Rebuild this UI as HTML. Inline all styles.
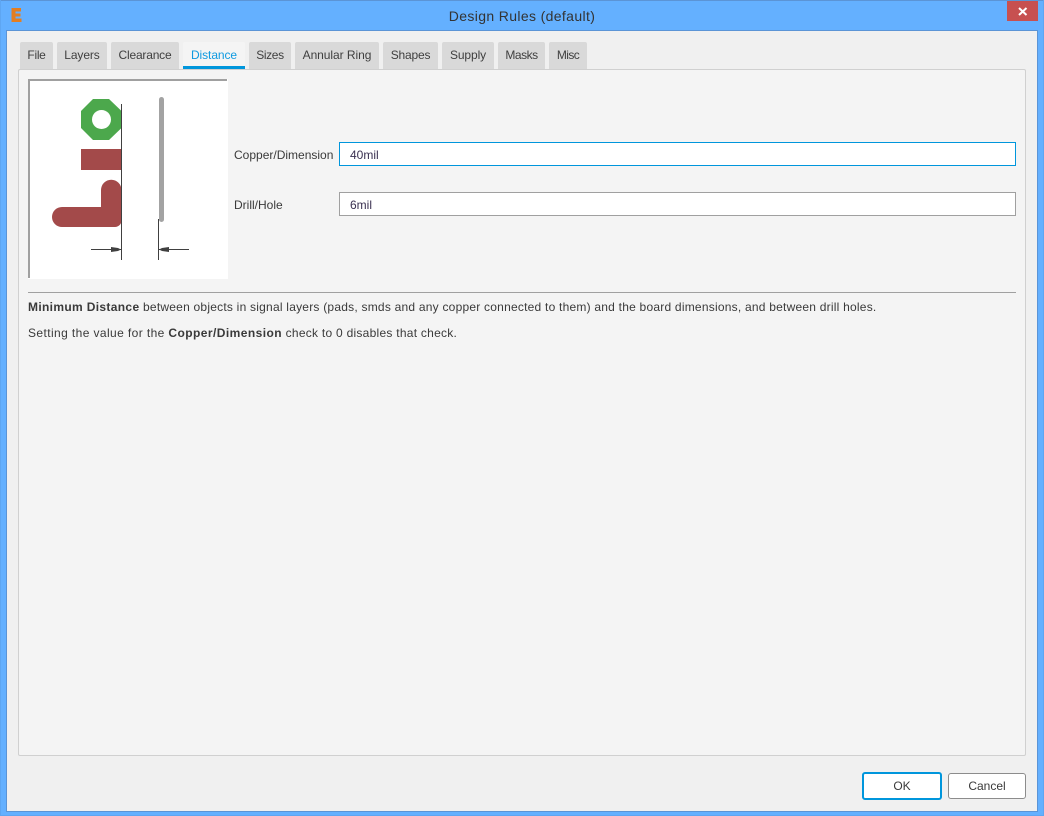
<!DOCTYPE html>
<html><head><meta charset="utf-8">
<style>
html,body{margin:0;padding:0}
body{width:1044px;height:816px;overflow:hidden;position:relative;background:#64b0ff;font-family:"Liberation Sans",sans-serif;font-size:12px;color:#3a3a3a}
div{position:absolute;box-sizing:border-box;white-space:nowrap}
b{font-weight:bold}
.tab{top:42px;height:27px;background:#d9d9d9;border-radius:2px 2px 0 0;text-align:center;line-height:26px;color:#3f3f3f}
.input{left:339px;width:677px;height:24px;background:#fff;border:1px solid #a0a0a0;line-height:24px;padding-left:10px;color:#3a3050}
.lbl{left:234px;line-height:16px}
.t{left:28px;line-height:16px;color:#3a3a3a}
</style></head><body>
<div style="left:0;top:0;width:1044px;height:1px;background:#5b94d6"></div>
<div style="left:0;top:0;width:1px;height:816px;background:#5ea6f2"></div>
<div style="left:1043px;top:0;width:1px;height:816px;background:#5ea6f2"></div>
<div style="left:0;top:815px;width:1044px;height:1px;background:#5ea6f2"></div>
<svg style="position:absolute;left:11px;top:8px" width="12" height="15"><path d="M0.500 0H10V3.500H4.500V5.500H9.500V8.500H4.500V10.500H10.500V14H0.500Z" fill="#e37e22"/></svg>
<div style="left:422px;top:7px;width:200px;text-align:center;font-size:14px;line-height:18px;color:#333;letter-spacing:.36px">Design Rules (default)</div>
<div style="left:1007px;top:1px;width:31px;height:20px;background:#c75050"></div>
<svg style="position:absolute;left:1018px;top:7px" width="10" height="9"><path d="M1 1L8.500 8M8.500 1L1 8" stroke="#fff" stroke-width="2" fill="none"/></svg>

<div style="left:6px;top:30px;width:1032px;height:782px;background:#f0f0f0;border:1px solid #5b94d6"></div>

<div style="left:18px;top:69px;width:1008px;height:687px;background:#f4f4f4;border:1px solid #d0d0d0;border-radius:2px"></div>

<div class="tab" style="left:20px;width:33px;letter-spacing:-.3px">File</div>
<div class="tab" style="left:57px;width:50px;letter-spacing:-.1px">Layers</div>
<div class="tab" style="left:111px;width:68px;letter-spacing:-.2px">Clearance</div>
<div class="tab" style="left:183px;width:62px;background:#f4f4f4;color:#0f9ae0;border-bottom:3px solid #0096dc;letter-spacing:-.08px">Distance</div>
<div class="tab" style="left:249px;width:42px;letter-spacing:-.35px">Sizes</div>
<div class="tab" style="left:295px;width:84px;letter-spacing:-.05px">Annular Ring</div>
<div class="tab" style="left:383px;width:55px;letter-spacing:-.2px">Shapes</div>
<div class="tab" style="left:442px;width:52px;letter-spacing:-.1px">Supply</div>
<div class="tab" style="left:498px;width:47px;letter-spacing:-.5px">Masks</div>
<div class="tab" style="left:549px;width:38px;letter-spacing:-.6px">Misc</div>

<svg style="position:absolute;left:28px;top:79px" width="200" height="200" viewBox="28 79 200 200">
<rect x="28" y="79" width="200" height="200" fill="#fff"/>
<path d="M28 79H227V81H30V278H28Z" fill="#a0a0a0"/>
<path d="M93 99H109L121.500 111V128L109 140H93L81 128V111Z" fill="#4ca84c"/>
<circle cx="101.500" cy="119.500" r="9.500" fill="#fff"/>
<rect x="81" y="149" width="40.500" height="21" fill="#a34a4a"/>
<path d="M121.500 190A10 10 0 0 0 101 190V207H62A10 10 0 0 0 62 227H115A6.500 6.500 0 0 0 121.500 220Z" fill="#a34a4a"/>
<rect x="159" y="97" width="5" height="125" rx="2.500" fill="#a3a3a3"/>
<path d="M121.500 104V260M158.500 219V260" stroke="#404040" stroke-width="1" fill="none"/>
<path d="M91 249.500H121M159 249.500H189" stroke="#404040" stroke-width="1" fill="none"/>
<path d="M111 247L118 248L121 249.500L118 251L111 252ZM169 247L162 248L159 249.500L162 251L169 252Z" fill="#404040"/>
</svg>

<div class="lbl" style="top:147px">Copper/Dimension</div>
<div class="input" style="top:142px;border-color:#0096dc">40mil</div>
<div class="lbl" style="top:197px">Drill/Hole</div>
<div class="input" style="top:192px">6mil</div>

<div style="left:28px;top:292px;width:988px;height:1px;background:#a0a0a0"></div>
<div class="t" style="top:299px;letter-spacing:.225px"><b style="letter-spacing:.34px">Minimum Distance</b> between objects in signal layers (pads, smds and any copper connected to them) and the board dimensions, and between drill holes.</div>
<div class="t" style="top:325px;letter-spacing:.26px"><span style="letter-spacing:.4px">Setting the value for the</span> <b style="letter-spacing:.44px">Copper/Dimension</b> check to 0 disables that check.</div>

<div style="left:862px;top:772px;width:80px;height:28px;background:#fff;border:2px solid #0096dc;border-radius:3px;text-align:center;line-height:25px">OK</div>
<div style="left:948px;top:773px;width:78px;height:26px;background:#fff;border:1px solid #8c8c8c;border-radius:3px;text-align:center;line-height:25px">Cancel</div>
</body></html>
